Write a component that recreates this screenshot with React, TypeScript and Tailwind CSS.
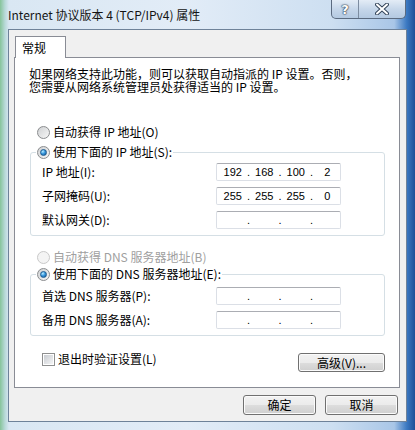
import React from "react";

const cjk = "font-['Noto_Sans_CJK_SC',sans-serif]";

function Radio({ checked, disabled }: { checked?: boolean; disabled?: boolean }) {
  return (
    <span
      className={
        "flex h-[13px] w-[13px] shrink-0 items-center justify-center rounded-full border " +
        (disabled
          ? "border-[#c9c9c9] bg-[#f4f4f4]"
          : "border-[#8a8c8e] bg-[linear-gradient(135deg,#cfd1d3,#f7f7f7)]")
      }
    >
      {checked && (
        <span className="h-[7px] w-[7px] rounded-full border border-[#1d5c92] bg-[radial-gradient(circle_at_35%_30%,#b8ecff_0%,#3a9ae0_45%,#11508c_100%)]" />
      )}
    </span>
  );
}

function RadioRow({ label, checked, disabled }: { label: string; checked?: boolean; disabled?: boolean }) {
  return (
    <span className="flex h-[16px] items-center gap-[3px] bg-white px-[1px]">
      <Radio checked={checked} disabled={disabled} />
      <span className={"leading-[12px] " + (disabled ? "text-[#a0a0a0]" : "text-black")}>{label}</span>
    </span>
  );
}

function IpField({ parts }: { parts?: string[] }) {
  const p = parts ?? ["", "", "", ""];
  return (
    <div className="flex h-[18px] w-[125px] items-center rounded-[2px] border border-[#dbdfe6] border-t-[#abadb3] bg-white pl-[3px] font-['Liberation_Sans',sans-serif] text-[11px] leading-none text-black">
      {p.map((v, i) => (
        <React.Fragment key={i}>
          <span className="w-[26px] text-center">{v}</span>
          {i < 3 && <span className="w-[6px] text-center">.</span>}
        </React.Fragment>
      ))}
    </div>
  );
}

function FieldRow({ label, parts }: { label: string; parts?: string[] }) {
  return (
    <div className="flex h-[18px] items-center">
      <span className="w-[174px] leading-[12px]">{label}</span>
      <IpField parts={parts} />
    </div>
  );
}

function WinButton({ label, className }: { label: string; className: string }) {
  return (
    <div
      className={
        "flex items-center justify-center rounded-[3px] border border-[#707070] bg-[linear-gradient(#f2f2f2_0%,#ebebeb_50%,#dddddd_51%,#cfcfcf_100%)] shadow-[inset_0_0_0_1px_#fbfbfb] leading-none text-black " +
        className
      }
    >
      {label}
    </div>
  );
}

export default function App() {
  return (
    <div
      className={
        "flex h-[430px] w-[415px] flex-col overflow-hidden bg-[linear-gradient(90deg,#86c49a_0px,#b8d9d8_5px,#d9e7f3_9px,#e2ecf7_45%,#cddff1_80%,#a9c6e7_95%,#3b79c2_98%,#1d4f97_100%)] text-[12px] " +
        cjk
      }
    >
      {/* title bar */}
      <div className="flex h-[29px] items-start">
        <div className="pl-[8px] pt-[7px] leading-[16px] text-[#141414]">Internet 协议版本 4 (TCP/IPv4) 属性</div>
        <div className="ml-auto mr-[9px] flex h-[19px] overflow-hidden rounded-b-[5px] border border-t-0 border-[#5b6b80] bg-[linear-gradient(#e3ecf6,#c6d7ea_50%,#b4c9e1)]">
          <div className="flex w-[27px] items-center justify-center border-r border-[#7c8ca0] font-['DejaVu_Sans',sans-serif] text-[13px] font-bold leading-none text-white [text-shadow:0_0_1px_#2b3a4c,0_0_1px_#2b3a4c,0_0_2px_#2b3a4c]">
            ?
          </div>
          <div className="flex w-[46px] items-center justify-center">
            <svg width="14" height="12" viewBox="0 0 14 12">
              <path d="M2 1.5 L12 10.5 M12 1.5 L2 10.5" stroke="#34455a" strokeWidth="4" strokeLinecap="round" />
              <path d="M2 1.5 L12 10.5 M12 1.5 L2 10.5" stroke="#ffffff" strokeWidth="2" strokeLinecap="round" />
            </svg>
          </div>
        </div>
      </div>

      {/* client area */}
      <div className="ml-[8px] flex h-[393px] w-[399px] flex-col border border-[#6e8299] bg-[#f0f0f0] pl-[5px] pt-[6px]">
        <div className="relative z-10 -mb-px ml-[1px] flex h-[22px] w-[51px] items-center border border-b-0 border-[#898c95] bg-white pl-[6px] leading-[12px]">
          常规
        </div>
        <div className="flex h-[331px] w-[386px] flex-col border border-[#898c95] bg-white pl-[15px]">
          <p className="-ml-[1px] mt-[9px] leading-[13px]">
            如果网络支持此功能，则可以获取自动指派的 IP 设置。否则，
            <br />
            您需要从网络系统管理员处获得适当的 IP 设置。
          </p>

          <div className="mt-[31px] pl-[6px]">
            <RadioRow label="自动获得 IP 地址(O)" />
          </div>
          <fieldset className="mt-[4px] w-[355px] rounded-[3px] border border-[#d5dfe5] px-0 pb-[6px]">
            <legend className="ml-[5px]">
              <RadioRow label="使用下面的 IP 地址(S):" checked />
            </legend>
            <div className="flex flex-col gap-[6px] pl-[11px] pt-[3px]">
              <FieldRow label="IP 地址(I):" parts={["192", "168", "100", "2"]} />
              <FieldRow label="子网掩码(U):" parts={["255", "255", "255", "0"]} />
              <FieldRow label="默认网关(D):" />
            </div>
          </fieldset>

          <div className="mt-[13px] pl-[6px]">
            <RadioRow label="自动获得 DNS 服务器地址(B)" disabled />
          </div>
          <fieldset className="mt-[1px] w-[355px] rounded-[3px] border border-[#d5dfe5] px-0 pb-[6px]">
            <legend className="ml-[5px]">
              <RadioRow label="使用下面的 DNS 服务器地址(E):" checked />
            </legend>
            <div className="flex flex-col gap-[6px] pl-[11px] pt-[5px]">
              <FieldRow label="首选 DNS 服务器(P):" />
              <FieldRow label="备用 DNS 服务器(A):" />
            </div>
          </fieldset>

          <div className="mt-[15px] flex w-[355px] items-start">
            <div className="ml-[12px] flex h-[16px] items-center gap-[3px]">
              <span className="flex h-[13px] w-[13px] items-center justify-center border border-[#8e8f8f] bg-white">
                <span className="h-[9px] w-[9px] bg-[linear-gradient(135deg,#c9ccd1,#f4f5f6)]" />
              </span>
              <span className="leading-[12px]">退出时验证设置(L)</span>
            </div>
            <WinButton label="高级(V)..." className="ml-auto mt-[2px] h-[19px] w-[87px]" />
          </div>
        </div>

        <div className="mt-[7px] flex justify-end gap-[9px] pr-[8px]">
          <WinButton label="确定" className="h-[20px] w-[73px]" />
          <WinButton label="取消" className="h-[20px] w-[73px]" />
        </div>
      </div>
    </div>
  );
}
